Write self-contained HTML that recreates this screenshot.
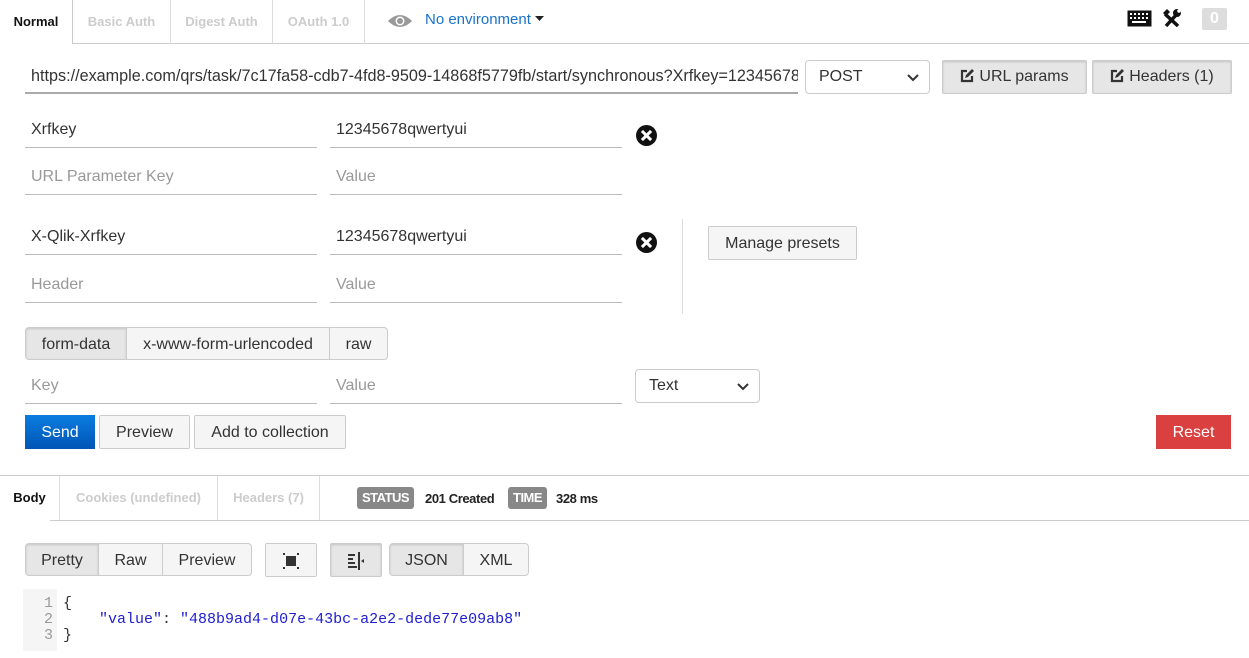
<!DOCTYPE html>
<html><head><meta charset="utf-8"><style>
*{box-sizing:border-box;margin:0;padding:0}
body{width:1249px;height:658px;background:#fff;font-family:"Liberation Sans",sans-serif;position:relative;overflow:hidden;color:#333}
.a{position:absolute}
.tab{position:absolute;top:0;height:44px;line-height:44px;font-size:13px;font-weight:bold;color:#ccc;border-right:1px solid #ddd;text-align:center}
.inp{position:absolute;height:34px;border-bottom:1px solid #bbb;font-size:16px;line-height:32px;padding-left:6px;color:#333}
.ph{color:#999}
.btn{position:absolute;border:1px solid #ccc;background:#f5f5f5;font-size:16px;text-align:center;color:#333;border-radius:2px}
.gb{background:#e6e6e6;box-shadow:inset 0 1px 2px rgba(0,0,0,.15)}
.x{position:absolute;width:21px;height:21px;border-radius:50%;background:#111}
.x:before,.x:after{content:"";position:absolute;left:4px;top:9px;width:13px;height:3px;background:#fff;transform:rotate(45deg)}
.x:after{transform:rotate(-45deg)}
.badge{position:absolute;background:#888;color:#fff;font-size:13px;font-weight:bold;border-radius:3px;height:22px;line-height:22px;padding:0 5px}
.chev{position:absolute;right:10px;top:13px}
.ed{display:inline-block;vertical-align:-2px;margin-right:5px}
</style></head><body>
<div class="a" style="left:0;top:43px;width:1249px;height:1px;background:#ccc"></div>
<div class="tab" style="left:0;width:73px;color:#111;background:#fff;height:44px;border-right:1px solid #ccc">Normal</div>
<div class="tab" style="left:73px;width:98px">Basic Auth</div>
<div class="tab" style="left:171px;width:102px">Digest Auth</div>
<div class="tab" style="left:273px;width:92px">OAuth 1.0</div>
<svg class="a" style="left:387px;top:13px" width="26" height="16" viewBox="0 0 26 16"><path d="M1 8 Q13 -4 25 8 Q13 20 1 8Z" fill="#999"/><circle cx="13" cy="8" r="4.5" fill="#fff"/><circle cx="13" cy="8" r="3" fill="#999"/></svg>
<div class="a" style="left:425px;top:11px;font-size:15px;color:#1a73c8">No environment <svg width="9" height="6" viewBox="0 0 9 6" style="vertical-align:2px"><path d="M0 0h9L4.5 5z" fill="#222"/></svg></div>
<svg class="a" style="left:1127px;top:10px" width="25" height="17" viewBox="0 0 25 17"><rect x="0.5" y="0.5" width="24" height="16" fill="#111"/><g fill="#fff"><rect x="3" y="3" width="2" height="2"/><rect x="7" y="3" width="2" height="2"/><rect x="11" y="3" width="2" height="2"/><rect x="15" y="3" width="2" height="2"/><rect x="19" y="3" width="2" height="2"/><rect x="3" y="7" width="2" height="2"/><rect x="7" y="7" width="2" height="2"/><rect x="11" y="7" width="2" height="2"/><rect x="15" y="7" width="2" height="2"/><rect x="19" y="7" width="2" height="2"/><rect x="5" y="11" width="14" height="2"/></g></svg>
<svg class="a" style="left:1162px;top:9px" width="19" height="19" viewBox="0 0 19 19"><path d="M4 17 L15 5" stroke="#111" stroke-width="3.5"/><path d="M3 5 L16 17" stroke="#111" stroke-width="3.5"/><path d="M1 4 L5 0 L8 3 L4 7Z" fill="#111"/><circle cx="15" cy="4" r="4" fill="#111"/><circle cx="17" cy="2" r="1.8" fill="#fff"/></svg>
<div class="a" style="left:1202px;top:8px;width:25px;height:22px;background:#ddd;color:#fff;font-size:16px;font-weight:bold;text-align:center;line-height:22px;border-radius:2px">0</div>

<div class="inp" style="left:25px;top:60px;width:773px;border-bottom:2px solid #aaa;overflow:hidden;white-space:nowrap;font-size:16.2px">https://example.com/qrs/task/7c17fa58-cdb7-4fd8-9509-14868f5779fb/start/synchronous?Xrfkey=12345678qwertyui</div>
<div class="a" style="left:805px;top:60px;width:125px;height:34px;border:1px solid #ccc;border-radius:4px;font-size:16px;line-height:32px;padding-left:13px">POST<svg class="chev" width="12" height="8" viewBox="0 0 12 8"><path d="M1 1l5 5 5-5" stroke="#333" stroke-width="2" fill="none"/></svg></div>
<div class="btn gb" style="left:942px;top:60px;width:145px;height:34px;line-height:32px"><svg class="ed" width="14" height="14" viewBox="0 0 14 14"><path d="M7 2H2v10h10V7" stroke="#333" stroke-width="2.2" fill="none"/><path d="M5 9l1-3 6-6 2 2-6 6z" fill="#333"/></svg>URL params</div>
<div class="btn gb" style="left:1092px;top:60px;width:140px;height:34px;line-height:32px"><svg class="ed" width="14" height="14" viewBox="0 0 14 14"><path d="M7 2H2v10h10V7" stroke="#333" stroke-width="2.2" fill="none"/><path d="M5 9l1-3 6-6 2 2-6 6z" fill="#333"/></svg>Headers (1)</div>

<div class="inp" style="left:25px;top:114px;width:292px">Xrfkey</div>
<div class="inp" style="left:330px;top:114px;width:292px">12345678qwertyui</div>
<div class="x" style="left:636px;top:125px"></div>
<div class="inp ph" style="left:25px;top:161px;width:292px">URL Parameter Key</div>
<div class="inp ph" style="left:330px;top:161px;width:292px">Value</div>

<div class="inp" style="left:25px;top:221px;width:292px">X-Qlik-Xrfkey</div>
<div class="inp" style="left:330px;top:221px;width:292px">12345678qwertyui</div>
<div class="x" style="left:636px;top:232px"></div>
<div class="inp ph" style="left:25px;top:269px;width:292px">Header</div>
<div class="inp ph" style="left:330px;top:269px;width:292px">Value</div>
<div class="a" style="left:682px;top:219px;width:1px;height:95px;background:#ddd"></div>
<div class="btn" style="left:708px;top:226px;width:149px;height:34px;line-height:34px;font-size:16px">Manage presets</div>

<div class="btn gb" style="left:25px;top:327px;width:102px;height:33px;line-height:33px;border-radius:4px 0 0 4px">form-data</div>
<div class="btn" style="left:126px;top:327px;width:204px;height:33px;line-height:33px">x-www-form-urlencoded</div>
<div class="btn" style="left:329px;top:327px;width:59px;height:33px;line-height:33px;border-radius:0 4px 4px 0">raw</div>
<div class="inp ph" style="left:25px;top:370px;width:292px">Key</div>
<div class="inp ph" style="left:330px;top:370px;width:292px">Value</div>
<div class="a" style="left:635px;top:369px;width:125px;height:34px;border:1px solid #ccc;border-radius:4px;font-size:16px;line-height:32px;padding-left:13px">Text<svg class="chev" width="12" height="8" viewBox="0 0 12 8"><path d="M1 1l5 5 5-5" stroke="#333" stroke-width="2" fill="none"/></svg></div>

<div class="a" style="left:25px;top:415px;width:70px;height:34px;background:linear-gradient(#0a7de0,#0055b5);color:#fff;font-size:16px;text-align:center;line-height:35px">Send</div>
<div class="btn" style="left:99px;top:415px;width:91px;height:34px;line-height:34px">Preview</div>
<div class="btn" style="left:194px;top:415px;width:152px;height:34px;line-height:34px">Add to collection</div>
<div class="a" style="left:1156px;top:415px;width:75px;height:34px;background:#d9403f;color:#fff;font-size:16px;text-align:center;line-height:35px">Reset</div>

<div class="a" style="left:0;top:475px;width:1249px;height:1px;background:#ccc"></div>
<div class="a" style="left:50px;top:520px;width:1199px;height:1px;background:#ccc"></div>
<div class="tab" style="top:476px;left:0;width:60px;color:#111;height:44px">Body</div>
<div class="tab" style="top:476px;left:60px;width:158px;height:44px">Cookies (undefined)</div>
<div class="tab" style="top:476px;left:218px;width:102px;height:44px">Headers (7)</div>
<div class="badge" style="left:357px;top:487px;letter-spacing:-0.5px">STATUS</div>
<div class="a" style="left:425px;top:491px;font-size:13px;font-weight:bold;color:#222;letter-spacing:-0.4px">201 Created</div>
<div class="badge" style="left:508px;top:487px;letter-spacing:-0.5px">TIME</div>
<div class="a" style="left:556px;top:491px;font-size:13px;font-weight:bold;color:#222;letter-spacing:-0.4px">328 ms</div>

<div class="btn gb" style="left:25px;top:543px;width:74px;height:33px;line-height:33px;border-radius:4px 0 0 4px">Pretty</div>
<div class="btn" style="left:98px;top:543px;width:65px;height:33px;line-height:33px">Raw</div>
<div class="btn" style="left:162px;top:543px;width:90px;height:33px;line-height:33px;border-radius:0 4px 4px 0">Preview</div>
<div class="btn" style="left:265px;top:543px;width:52px;height:34px"><svg style="margin-top:9px" width="16" height="16" viewBox="0 0 16 16"><rect x="3" y="3" width="10" height="10" fill="#333"/><g fill="#333"><rect x="0" y="0" width="2" height="2"/><rect x="14" y="0" width="2" height="2"/><rect x="0" y="14" width="2" height="2"/><rect x="14" y="14" width="2" height="2"/></g></svg></div>
<div class="btn gb" style="left:330px;top:543px;width:52px;height:34px"><svg style="margin-top:8px" width="20" height="18" viewBox="0 0 20 18"><g fill="#333"><rect x="2" y="2" width="7" height="2"/><rect x="2" y="6" width="5" height="2"/><rect x="2" y="10" width="7" height="2"/><rect x="2" y="14" width="9" height="2"/><rect x="12" y="0" width="2" height="18"/><path d="M15 9 l3 -2 v4z"/></g></svg></div>
<div class="btn gb" style="left:389px;top:543px;width:75px;height:33px;line-height:33px;border-radius:4px 0 0 4px">JSON</div>
<div class="btn" style="left:463px;top:543px;width:66px;height:33px;line-height:33px;border-radius:0 4px 4px 0">XML</div>

<div class="a" style="left:23px;top:589px;width:34px;height:62px;background:#f5f5f5"></div>
<div class="a" style="left:23px;top:596px;width:30px;font-family:'Liberation Mono',monospace;font-size:15px;line-height:16px;color:#999;text-align:right">1<br>2<br>3</div>
<div class="a" style="left:63px;top:596px;font-family:'Liberation Mono',monospace;font-size:15px;line-height:16px;color:#333;white-space:pre">{
    <span style="color:#2020d0">"value"</span>: <span style="color:#2020d0">"488b9ad4-d07e-43bc-a2e2-dede77e09ab8"</span>
}</div>
</body></html>
